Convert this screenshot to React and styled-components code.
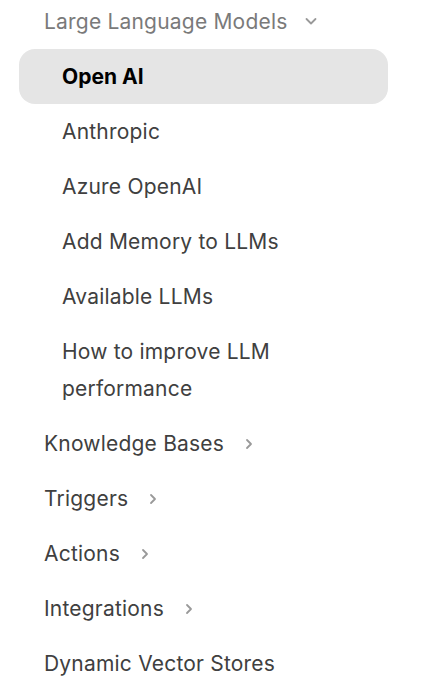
import React from "react";
import styled, { createGlobalStyle } from "styled-components";

const GlobalStyle = createGlobalStyle`
  body {
    margin: 0;
    background: #fff;
    font-family: Inter, "Noto Sans", sans-serif;
  }
`;

const Nav = styled.nav`
  display: flex;
  flex-direction: column;
  padding: 2px 39px 0 19px;
`;

const Header = styled.div`
  display: flex;
  align-items: center;
  gap: 16px;
  padding: 0 25px;
  height: 38px;
  margin-bottom: 9px;
  font-size: 21px;
  letter-spacing: 0.2px;
  color: #7a7a7a;
`;

const SubList = styled.div`
  display: flex;
  flex-direction: column;
`;

const Item = styled.div`
  padding: 9px 43px;
  border-radius: 16px;
  font-size: 21px;
  line-height: 37px;
  letter-spacing: ${(p) => (p.$active ? "0" : "0.2px")};
  color: ${(p) => (p.$active ? "#000" : "#404040")};
  font-weight: ${(p) => (p.$active ? 700 : 400)};
  background: ${(p) => (p.$active ? "#e5e5e5" : "transparent")};
`;

const Section = styled.div`
  display: flex;
  align-items: center;
  gap: 17px;
  padding: 9px 25px;
  font-size: 21px;
  line-height: 37px;
  letter-spacing: 0.2px;
  color: #404040;
`;

const Chevron = ({ down }) => (
  <svg width="16" height="16" viewBox="0 0 16 16" fill="none">
    <path
      d={down ? "M3.5 6 L8 10.5 L12.5 6" : "M6 4 L10 8 L6 12"}
      stroke="#999"
      strokeWidth="1.8"
      strokeLinecap="round"
      strokeLinejoin="round"
    />
  </svg>
);

const items = [
  "Open AI",
  "Anthropic",
  "Azure OpenAI",
  "Add Memory to LLMs",
  "Available LLMs",
  "How to improve LLM performance",
];

const sections = [
  { label: "Knowledge Bases", more: true },
  { label: "Triggers", more: true },
  { label: "Actions", more: true },
  { label: "Integrations", more: true },
  { label: "Dynamic Vector Stores", more: false },
];

export default function App() {
  return (
    <>
      <GlobalStyle />
      <Nav>
        <Header>
          Large Language Models
          <Chevron down />
        </Header>
        <SubList>
          {items.map((label, i) => (
            <Item key={label} $active={i === 0}>
              {label}
            </Item>
          ))}
        </SubList>
        {sections.map((s) => (
          <Section key={s.label}>
            {s.label}
            {s.more && <Chevron />}
          </Section>
        ))}
      </Nav>
    </>
  );
}
